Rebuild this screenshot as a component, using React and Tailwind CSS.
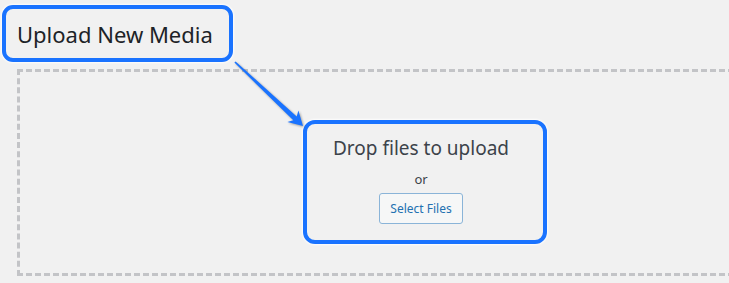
import React from "react";

const ArrowCallout = () => (
  <svg
    className="absolute left-0 top-0 pointer-events-none"
    width="729"
    height="283"
    viewBox="0 0 729 283"
    style={{ filter: "drop-shadow(1px 1px 1px rgba(0,0,0,0.35))" }}
  >
    <polygon
      points="234.4,62.6 293.3,120.2 287.4,122.1 303,126 298.4,110.5 296.7,116.6 235.6,61.4"
      fill="#1a73ff"
    />
  </svg>
);

export default function App() {
  return (
    <div
      className="relative w-[729px] h-[283px] overflow-hidden bg-[#f1f1f1]"
      style={{ fontFamily: '"Noto Sans", "Open Sans", sans-serif' }}
    >
      {/* page heading with callout frame */}
      <div className="ml-[2px] pt-[5px]">
        <div className="flex items-center w-[231px] h-[57px] pl-[11px] border-4 border-[#1a73ff] rounded-[11px] shadow-[0_0_2px_1px_rgba(255,255,255,0.9)]">
          <h1 className="text-[22px] leading-none text-[#1d2327]">
            Upload New Media
          </h1>
        </div>
      </div>

      {/* drop area */}
      <div className="ml-[17px] mt-[7px] w-[816px] h-[207px] border-[3px] border-dashed border-[#c3c4c7] flex flex-col items-center pt-[48px]">
        <div className="w-[244px] h-[124px] border-4 border-[#1a73ff] rounded-[12px] flex flex-col items-center pt-[11px] pr-[8px] shadow-[0_0_2px_1px_rgba(255,255,255,0.9)]">
          <p className="text-[19px] leading-[27px] text-[#3c434a]">
            Drop files to upload
          </p>
          <p className="mt-[7px] text-[13px] leading-[20px] text-[#3c434a]">
            or
          </p>
          <button className="mt-[4px] w-[84px] h-[31px] border border-[#8ab4d8] rounded-[3px] bg-[#f6f7f7] text-[12px] text-[#2271b1]">
            Select Files
          </button>
        </div>
      </div>

      <ArrowCallout />
    </div>
  );
}
